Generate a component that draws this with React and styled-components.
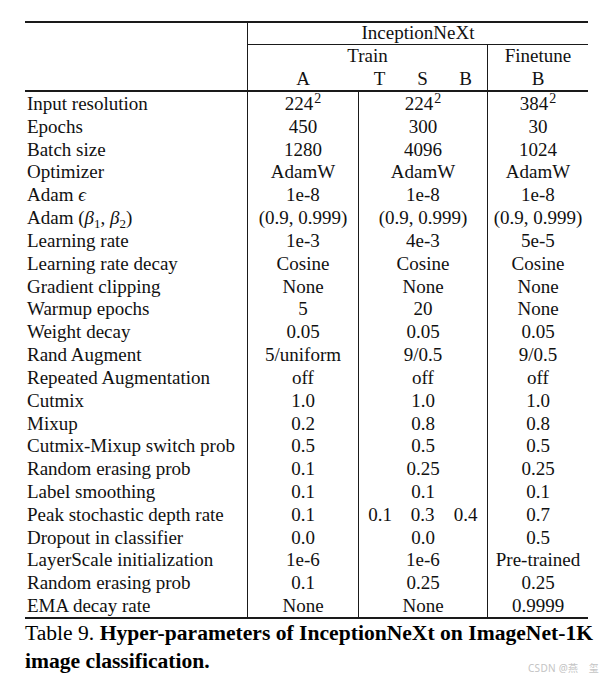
import React from "react"
import styled, { createGlobalStyle } from "styled-components"

const GlobalStyle = createGlobalStyle`
  html, body {
    margin: 0;
    padding: 0;
    background: #fff;
  }
  body {
    font-family: "Liberation Serif", "Times New Roman", "DejaVu Serif", serif;
    color: #111;
  }
`

const ink = "#111"
const rule = "#1a1a1a"
const columns = "222px 111px 43px 43px 43px 101px"

const Page = styled.div`
  position: relative;
  width: 602px;
  height: 681px;
  padding: 21px 0 0 25px;
  box-sizing: border-box;
  overflow: hidden;
`

const Table = styled.div`
  width: 563px;
  border-top: 2px solid ${rule};
  border-bottom: 2px solid ${rule};
  font-size: 19px;
  color: ${ink};
`

const Head = styled.div`
  display: grid;
  grid-template-columns: ${columns};
  grid-template-rows: 22px 23px 22px;
  border-bottom: 2px solid ${rule};
`

const Row = styled.div`
  display: grid;
  grid-template-columns: ${columns};
  height: 22.83px;
`

const Cell = styled.div`
  grid-column: ${(p) => p.$col || "auto"};
  grid-row: ${(p) => p.$row || "auto"};
  display: flex;
  align-items: center;
  justify-content: center;
  padding-bottom: ${(p) => (p.$lift ? `${p.$lift}px` : "0")};
  white-space: nowrap;
  line-height: 1;
  border-left: ${(p) => (p.$line ? `1px solid ${rule}` : "none")};
  border-bottom: ${(p) => (p.$under ? `1px solid ${rule}` : "none")};
`

const Label = styled(Cell)`
  justify-content: flex-start;
  padding-left: 2px;
`

const Text = styled.span`
  display: inline-block;
`

const Sq = styled.span`
  font-size: 14px;
  position: relative;
  top: -7px;
  margin-left: 1px;
`

const It = styled.i`
  font-style: italic;
`

const Sub = styled.span`
  font-size: 13px;
  position: relative;
  top: 4px;
`

const Caption = styled.p`
  margin: 0;
  width: 577px;
  font-size: 21.6px;
  line-height: 28px;
  color: #000;
  b {
    font-weight: bold;
  }
`

const Watermark = styled.span`
  position: absolute;
  right: 3px;
  bottom: 6px;
  font-family: "Noto Sans", "Noto Sans CJK SC", sans-serif;
  font-size: 10px;
  color: #c4c4c4;
  letter-spacing: 0.3px;
`

const sq = (n) => (
  <>
    {n}
    <Sq>2</Sq>
  </>
)

const rows = [
  ["Input resolution", sq("224"), sq("224"), sq("384")],
  ["Epochs", "450", "300", "30"],
  ["Batch size", "1280", "4096", "1024"],
  ["Optimizer", "AdamW", "AdamW", "AdamW"],
  [
    <>
      Adam <It>&#1013;</It>
    </>,
    "1e-8",
    "1e-8",
    "1e-8",
  ],
  [
    <>
      Adam (<It>β</It>
      <Sub>1</Sub>, <It>β</It>
      <Sub>2</Sub>)
    </>,
    "(0.9, 0.999)",
    "(0.9, 0.999)",
    "(0.9, 0.999)",
  ],
  ["Learning rate", "1e-3", "4e-3", "5e-5"],
  ["Learning rate decay", "Cosine", "Cosine", "Cosine"],
  ["Gradient clipping", "None", "None", "None"],
  ["Warmup epochs", "5", "20", "None"],
  ["Weight decay", "0.05", "0.05", "0.05"],
  ["Rand Augment", "5/uniform", "9/0.5", "9/0.5"],
  ["Repeated Augmentation", "off", "off", "off"],
  ["Cutmix", "1.0", "1.0", "1.0"],
  ["Mixup", "0.2", "0.8", "0.8"],
  ["Cutmix-Mixup switch prob", "0.5", "0.5", "0.5"],
  ["Random erasing prob", "0.1", "0.25", "0.25"],
  ["Label smoothing", "0.1", "0.1", "0.1"],
  ["Peak stochastic depth rate", "0.1", ["0.1", "0.3", "0.4"], "0.7"],
  ["Dropout in classifier", "0.0", "0.0", "0.5"],
  ["LayerScale initialization", "1e-6", "1e-6", "Pre-trained"],
  ["Random erasing prob", "0.1", "0.25", "0.25"],
  ["EMA decay rate", "None", "None", "0.9999"],
]

const Body = () =>
  rows.map(([label, a, train, ft], i) => (
    <Row key={i}>
      <Label>
        <Text>{label}</Text>
      </Label>
      <Cell $line>
        <Text>{a}</Text>
      </Cell>
      {Array.isArray(train) ? (
        train.map((v, j) => (
          <Cell key={j} $line={j === 0}>
            <Text>{v}</Text>
          </Cell>
        ))
      ) : (
        <Cell $col="3 / 6" $line>
          <Text>{train}</Text>
        </Cell>
      )}
      <Cell $line>
        <Text>{ft}</Text>
      </Cell>
    </Row>
  ))

export default function App() {
  return (
    <>
      <GlobalStyle />
      <Page>
        <Table>
          <Head>
            <Cell $col="1" $row="1 / 4" />
            <Cell $col="2 / 7" $row="1" $line $under $lift={2}>
              <Text>InceptionNeXt</Text>
            </Cell>
            <Cell $col="2 / 6" $row="2" $line $lift={3}>
              <Text>Train</Text>
            </Cell>
            <Cell $col="6" $row="2" $line $lift={3}>
              <Text>Finetune</Text>
            </Cell>
            <Cell $col="2" $row="3" $line $lift={2}>
              <Text>A</Text>
            </Cell>
            <Cell $col="3" $row="3" $lift={2}>
              <Text>T</Text>
            </Cell>
            <Cell $col="4" $row="3" $lift={2}>
              <Text>S</Text>
            </Cell>
            <Cell $col="5" $row="3" $lift={2}>
              <Text>B</Text>
            </Cell>
            <Cell $col="6" $row="3" $line $lift={2}>
              <Text>B</Text>
            </Cell>
          </Head>
          <Body />
        </Table>
        <Caption>
          Table 9. <b>Hyper-parameters of InceptionNeXt on ImageNet-1K</b>
          <br />
          <b>image classification.</b>
        </Caption>
        <Watermark>CSDN @燕　玺</Watermark>
      </Page>
    </>
  )
}
